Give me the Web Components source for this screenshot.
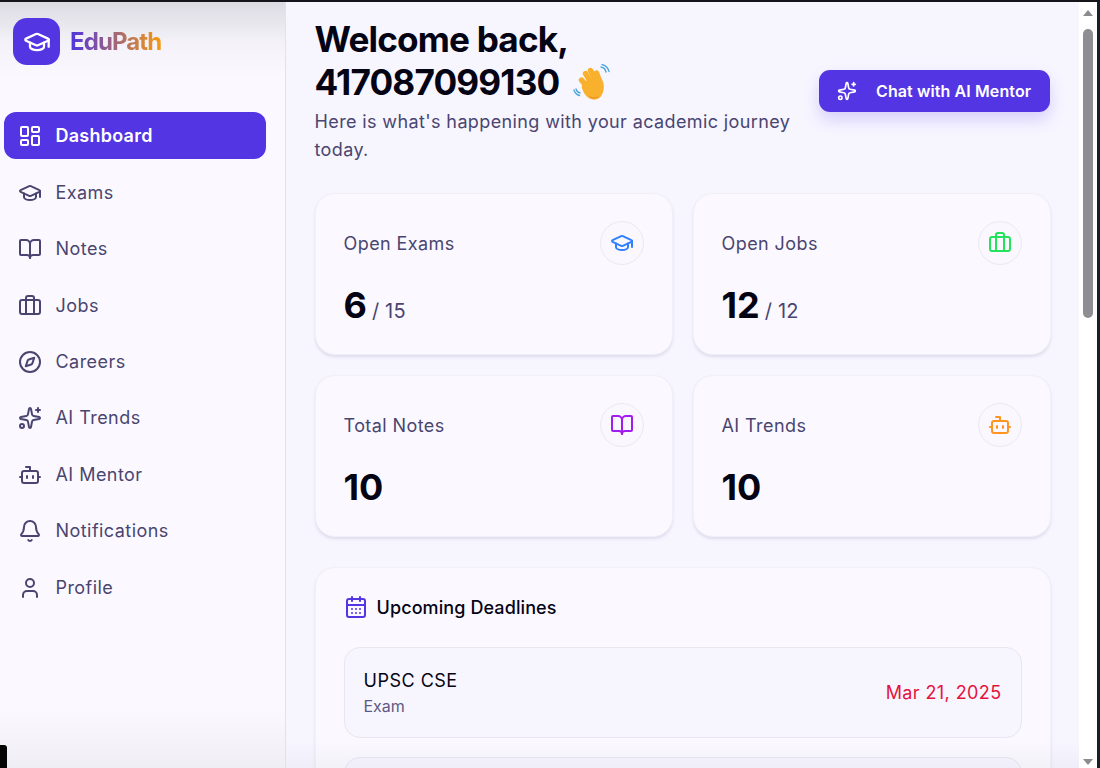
<!DOCTYPE html>
<html lang="en">
<head>
<meta charset="utf-8">
<title>EduPath</title>
<style>
    html, body { margin: 0; padding: 0; height: 100%; overflow: hidden; background: #f7f6ff; }
    body { font-family: "Inter", "Liberation Sans", sans-serif; }
</style>
</head>
<body>
<edu-app>
    <edu-sidebar slot="sidebar">
        <edu-nav-item icon="dashboard" active>Dashboard</edu-nav-item>
        <edu-nav-item icon="cap">Exams</edu-nav-item>
        <edu-nav-item icon="book">Notes</edu-nav-item>
        <edu-nav-item icon="briefcase">Jobs</edu-nav-item>
        <edu-nav-item icon="compass">Careers</edu-nav-item>
        <edu-nav-item icon="sparkles">AI Trends</edu-nav-item>
        <edu-nav-item icon="bot">AI Mentor</edu-nav-item>
        <edu-nav-item icon="bell">Notifications</edu-nav-item>
        <edu-nav-item icon="user">Profile</edu-nav-item>
    </edu-sidebar>

    <edu-welcome name="417087099130"></edu-welcome>

    <edu-stat-grid>
        <edu-stat-card label="Open Exams" value="6" total="15" icon="cap" color="#2f80ff"></edu-stat-card>
        <edu-stat-card label="Open Jobs" value="12" total="12" icon="briefcase" color="#22e35a"></edu-stat-card>
        <edu-stat-card label="Total Notes" value="10" icon="book" color="#a21cf0"></edu-stat-card>
        <edu-stat-card label="AI Trends" value="10" icon="bot" color="#ff9520"></edu-stat-card>
    </edu-stat-grid>

    <edu-deadlines>
        <edu-deadline-row name="UPSC CSE" kind="Exam" date="Mar 21, 2025"></edu-deadline-row>
        <edu-deadline-row></edu-deadline-row>
    </edu-deadlines>
</edu-app>

<script>
// Tracés des icônes (24x24, trait)
const ICONS = {
    dashboard: '<rect x="3" y="3" width="7" height="9" rx="1"/><rect x="14" y="3" width="7" height="5" rx="1"/><rect x="14" y="12" width="7" height="9" rx="1"/><rect x="3" y="16" width="7" height="5" rx="1"/>',
    cap: '<path d="M21.42 10.922a1 1 0 0 0-.019-1.838L12.83 5.18a2 2 0 0 0-1.66 0L2.6 9.08a1 1 0 0 0 0 1.832l8.57 3.908a2 2 0 0 0 1.66 0z"/><path d="M22 10v6"/><path d="M6 12.5V16a6 3 0 0 0 12 0v-3.5"/>',
    book: '<path d="M12 7v14"/><path d="M3 18a1 1 0 0 1-1-1V4a1 1 0 0 1 1-1h5a4 4 0 0 1 4 4 4 4 0 0 1 4-4h5a1 1 0 0 1 1 1v13a1 1 0 0 1-1 1h-6a3 3 0 0 0-3 3 3 3 0 0 0-3-3z"/>',
    briefcase: '<path d="M16 20V4a2 2 0 0 0-2-2h-4a2 2 0 0 0-2 2v16"/><rect x="2" y="6" width="20" height="14" rx="2"/>',
    compass: '<path d="m16.24 7.76-1.804 5.411a2 2 0 0 1-1.265 1.265L7.76 16.24l1.804-5.411a2 2 0 0 1 1.265-1.265z"/><circle cx="12" cy="12" r="10"/>',
    sparkles: '<path d="M11.017 2.814a1 1 0 0 1 1.966 0l1.051 5.558a2 2 0 0 0 1.594 1.594l5.558 1.051a1 1 0 0 1 0 1.966l-5.558 1.051a2 2 0 0 0-1.594 1.594l-1.051 5.558a1 1 0 0 1-1.966 0l-1.051-5.558a2 2 0 0 0-1.594-1.594l-5.558-1.051a1 1 0 0 1 0-1.966l5.558-1.051a2 2 0 0 0 1.594-1.594z"/><path d="M20 2v4"/><path d="M22 4h-4"/><circle cx="4" cy="20" r="2"/>',
    bot: '<path d="M12 8V4H8"/><rect x="4" y="8" width="16" height="12" rx="2"/><path d="M2 14h2"/><path d="M20 14h2"/><path d="M15 13v2"/><path d="M9 13v2"/>',
    bell: '<path d="M10.268 21a2 2 0 0 0 3.464 0"/><path d="M3.262 15.326A1 1 0 0 0 4 17h16a1 1 0 0 0 .74-1.673C19.41 13.956 18 12.499 18 8A6 6 0 0 0 6 8c0 4.499-1.411 5.956-2.738 7.326"/>',
    user: '<path d="M19 21v-2a4 4 0 0 0-4-4H9a4 4 0 0 0-4 4v2"/><circle cx="12" cy="7" r="4"/>',
    calendar: '<path d="M8 2v4"/><path d="M16 2v4"/><rect x="3" y="4" width="18" height="18" rx="2"/><path d="M3 10h18"/><path d="M8 14h.01"/><path d="M12 14h.01"/><path d="M16 14h.01"/><path d="M8 18h.01"/><path d="M12 18h.01"/><path d="M16 18h.01"/>'
};

class EduIcon extends HTMLElement {
    connectedCallback() {
        const size = this.getAttribute('size') || 24;
        const root = this.attachShadow({ mode: 'open' });
        root.innerHTML = `
            <style>
                :host { display: inline-flex; flex: none; width: ${size}px; height: ${size}px; }
                svg { display: block; }
            </style>
            <svg xmlns="http://www.w3.org/2000/svg" width="${size}" height="${size}" viewBox="0 0 24 24" fill="none"
                 stroke="currentColor" stroke-width="2" stroke-linecap="round" stroke-linejoin="round">
                ${ICONS[this.getAttribute('name')] || ''}
            </svg>
        `;
    }
}

class EduApp extends HTMLElement {
    constructor() {
        super();
        this.attachShadow({ mode: 'open' }).innerHTML = `
            <style>
                :host {
                    display: flex;
                    flex-direction: column;
                    position: relative;
                    width: 1100px;
                    height: 768px;
                    overflow: hidden;
                    color: #050414;
                }
                .top { flex: none; height: 2px; background: #16151c; }
                .body { flex: 1; min-height: 0; display: flex; }
                main {
                    flex: 1;
                    min-width: 0;
                    overflow: hidden;
                    box-sizing: border-box;
                    padding: 16px 28.5px 0 28.5px;
                    background: #f7f6ff;
                    display: flex;
                    flex-direction: column;
                    position: relative;
                }
                .shade {
                    position: absolute;
                    left: 0; right: 0; bottom: 0;
                    height: 26px;
                    background: linear-gradient(rgba(90,85,120,0), rgba(90,85,120,.05));
                    pointer-events: none;
                }
                .blob {
                    position: absolute;
                    left: 0; bottom: 0;
                    width: 7px; height: 23px;
                    background: #050505;
                    border-top-right-radius: 3px;
                }
                .bar {
                    flex: none;
                    width: 18px;
                    background: #fff;
                    position: relative;
                    display: flex;
                    flex-direction: column;
                    align-items: center;
                }
                .edge { flex: none; width: 3px; background: #1d1c24; }
                .arrow { width: 0; height: 0; border-left: 5px solid transparent; border-right: 5px solid transparent; }
                .up { margin-top: 8px; border-bottom: 6px solid #8d8b92; }
                .thumb { margin-top: 13px; width: 10px; height: 289px; border-radius: 5px; background: #8f8d94; }
                .down { margin-top: auto; margin-bottom: 3px; border-top: 6px solid #8d8b92; }
            </style>
            <div class="top"></div>
            <div class="body">
                <slot name="sidebar"></slot>
                <main><slot></slot><div class="shade"></div></main>
                <div class="bar">
                    <div class="arrow up"></div>
                    <div class="thumb"></div>
                    <div class="arrow down"></div>
                </div>
                <div class="edge"></div>
            </div>
            <div class="blob"></div>
        `;
    }
}

class EduSidebar extends HTMLElement {
    constructor() {
        super();
        this.attachShadow({ mode: 'open' }).innerHTML = `
            <style>
                :host {
                    display: flex;
                    flex-direction: column;
                    flex: none;
                    width: 286px;
                    box-sizing: border-box;
                    border-right: 1px solid #e3e1ea;
                    background:
                        linear-gradient(rgba(70,68,85,.17), rgba(70,68,85,.04) 40px, rgba(70,68,85,0) 75px),
                        linear-gradient(0deg, rgba(70,68,85,.06), rgba(70,68,85,0) 60px),
                        #fbf9ff;
                }
                .brand { display: flex; align-items: center; gap: 10px; padding: 16px 0 0 13px; height: 47px; }
                .logo {
                    width: 47px; height: 47px;
                    border-radius: 14px;
                    background: #5336e2;
                    color: #fff;
                    display: flex;
                    align-items: center;
                    justify-content: center;
                }
                .name {
                    font-size: 24px;
                    font-weight: 700;
                    letter-spacing: -0.9px;
                    background: linear-gradient(90deg, #4f35e0, #f59a10);
                    -webkit-background-clip: text;
                    background-clip: text;
                    color: transparent;
                }
                nav { display: flex; flex-direction: column; gap: 9.4px; padding: 47px 19px 0 4px; }
            </style>
            <div class="brand">
                <div class="logo"><edu-icon name="cap" size="28"></edu-icon></div>
                <span class="name">EduPath</span>
            </div>
            <nav><slot></slot></nav>
        `;
    }
}

class EduNavItem extends HTMLElement {
    connectedCallback() {
        const root = this.attachShadow({ mode: 'open' });
        root.innerHTML = `
            <style>
                :host {
                    display: flex;
                    align-items: center;
                    gap: 13.5px;
                    height: 47px;
                    padding-left: 14px;
                    border-radius: 12px;
                    font-size: 18px;
                    line-height: 24px;
                    letter-spacing: 0.45px;
                    color: #4a4570;
                }
                :host([active]) {
                    background: #5335e4;
                    color: #fff;
                    font-weight: 600;
                    letter-spacing: 0.25px;
                    margin-bottom: 1px;
                }
            </style>
            <edu-icon name="${this.getAttribute('icon')}"></edu-icon>
            <span><slot></slot></span>
        `;
    }
}

class EduWelcome extends HTMLElement {
    connectedCallback() {
        const root = this.attachShadow({ mode: 'open' });
        root.innerHTML = `
            <style>
                :host { display: flex; align-items: center; gap: 16px; flex: none; margin-right: 0.5px; }
                .text { flex: 1; min-width: 0; }
                h1 { margin: 0; font-size: 35.2px; line-height: 42.5px; font-weight: 700; letter-spacing: -0.85px; color: #050414; }
                h1 svg { vertical-align: -7px; margin-left: 6px; }
                p { margin: 5px 0 0; font-size: 18px; line-height: 28px; letter-spacing: 0.38px; color: #4a4570; }
                button {
                    flex: none;
                    display: flex;
                    align-items: center;
                    gap: 19px;
                    height: 42px;
                    width: 231px;
                    box-sizing: border-box;
                    padding: 0 0 0 18px;
                    border: 0;
                    border-radius: 11px;
                    background: #5335e4;
                    color: #fff;
                    font: 600 16px "Inter", "Liberation Sans", sans-serif;
                    letter-spacing: 0.1px;
                    white-space: nowrap;
                    box-shadow: 0 8px 16px rgba(83,53,228,.2);
                }
            </style>
            <div class="text">
                <h1>Welcome back,<br>${this.getAttribute('name')}
                    <svg width="38" height="38" viewBox="0 0 38 38" fill="none" role="img" aria-label="waving hand">
                        <g stroke="#f9b02c" stroke-width="5.4" stroke-linecap="round">
                            <path d="M15 24 8.5 16"/>
                            <path d="M19 20 12.5 9.5"/>
                            <path d="M23 18 17.5 6.5"/>
                            <path d="M27 18 23.5 9"/>
                        </g>
                        <path d="M11 20c1-3 5-6 9-6s8 1 9.5 3 1.5 6 1 9-2 7-5 8.500-6 1.500-9 0-5.500-5-7-9-1-4 1.500-5.500z" fill="#f9b02c"/>
                        <path d="M16 32c3 1.800 7 1.800 10 0-1 3-9 3.500-10 0z" fill="#e8912a"/>
                        <g stroke="#4aa5dc" stroke-width="1.300" stroke-linecap="round">
                            <path d="M28 3c2.500.5 4.500 2.500 5 5"/>
                            <path d="M29 .5c3.500.8 6 3.300 7 7"/>
                            <path d="M3 25c.5 2 2 3.500 4 4"/>
                            <path d="M1 26c.7 2.800 2.800 4.800 5.500 5.500"/>
                        </g>
                    </svg>
                </h1>
                <p>Here is what's happening with your academic journey today.</p>
            </div>
            <button><edu-icon name="sparkles" size="20"></edu-icon>Chat with AI Mentor</button>
        `;
    }
}

class EduStatGrid extends HTMLElement {
    constructor() {
        super();
        this.attachShadow({ mode: 'open' }).innerHTML = `
            <style>
                :host {
                    display: grid;
                    grid-template-columns: 1fr 1fr;
                    gap: 20px;
                    flex: none;
                    margin-top: 29px;
                }
            </style>
            <slot></slot>
        `;
    }
}

class EduStatCard extends HTMLElement {
    connectedCallback() {
        const total = this.getAttribute('total');
        const root = this.attachShadow({ mode: 'open' });
        root.innerHTML = `
            <style>
                :host {
                    display: flex;
                    justify-content: space-between;
                    box-sizing: border-box;
                    height: 162px;
                    padding: 27px 27.5px 0 28px;
                    background: #fbf9ff;
                    border: 1px solid #f1eff7;
                    border-radius: 20px;
                    box-shadow: 0 2px 3px rgba(80,70,120,.14);
                }
                .label { margin-top: 11px; font-size: 18px; line-height: 24px; letter-spacing: 0.42px; color: #4a4570; }
                .value { margin-top: 27px; font-size: 36px; line-height: 44px; font-weight: 700; color: #050414; }
                .total { font-size: 20px; font-weight: 400; letter-spacing: 0.2px; color: #4a4570; margin-left: 5px; }
                .badge {
                    width: 44px; height: 44px;
                    box-sizing: border-box;
                    border-radius: 50%;
                    border: 1px solid #ebe9f1;
                    background: #faf8fe;
                    display: flex;
                    align-items: center;
                    justify-content: center;
                    color: ${this.getAttribute('color')};
                }
            </style>
            <div>
                <div class="label">${this.getAttribute('label')}</div>
                <div class="value">${this.getAttribute('value')}${total ? `<span class="total">/ ${total}</span>` : ''}</div>
            </div>
            <div class="badge"><edu-icon name="${this.getAttribute('icon')}"></edu-icon></div>
        `;
    }
}

class EduDeadlines extends HTMLElement {
    constructor() {
        super();
        this.attachShadow({ mode: 'open' }).innerHTML = `
            <style>
                :host {
                    display: block;
                    flex: none;
                    margin-top: 30px;
                    padding: 27px 28px 28px;
                    background: #fbf9ff;
                    border: 1px solid #f1eff7;
                    border-radius: 20px;
                    box-shadow: 0 2px 3px rgba(80,70,120,.14);
                }
                h2 {
                    display: flex;
                    align-items: center;
                    gap: 9px;
                    margin: 0 0 28px;
                    height: 24px;
                    font-size: 18px;
                    font-weight: 500;
                    letter-spacing: 0.1px;
                    color: #050414;
                }
                edu-icon { color: #5335e4; }
                .list { display: flex; flex-direction: column; gap: 19px; }
            </style>
            <h2><edu-icon name="calendar"></edu-icon>Upcoming Deadlines</h2>
            <div class="list"><slot></slot></div>
        `;
    }
}

class EduDeadlineRow extends HTMLElement {
    connectedCallback() {
        const root = this.attachShadow({ mode: 'open' });
        root.innerHTML = `
            <style>
                :host {
                    display: flex;
                    align-items: center;
                    justify-content: space-between;
                    box-sizing: border-box;
                    height: 91px;
                    padding: 0 19px;
                    background: #f7f6ff;
                    border: 1px solid #e8e6f0;
                    border-radius: 16px;
                }
                .name { font-size: 18px; line-height: 26px; letter-spacing: 0.5px; color: #050414; }
                .kind { font-size: 16px; line-height: 24px; color: #5f5a85; }
                .date { font-size: 18px; letter-spacing: 0.4px; color: #e6123d; }
            </style>
            <div>
                <div class="name">${this.getAttribute('name') || ''}</div>
                <div class="kind">${this.getAttribute('kind') || ''}</div>
            </div>
            <div class="date">${this.getAttribute('date') || ''}</div>
        `;
    }
}

customElements.define('edu-icon', EduIcon);
customElements.define('edu-app', EduApp);
customElements.define('edu-sidebar', EduSidebar);
customElements.define('edu-nav-item', EduNavItem);
customElements.define('edu-welcome', EduWelcome);
customElements.define('edu-stat-grid', EduStatGrid);
customElements.define('edu-stat-card', EduStatCard);
customElements.define('edu-deadlines', EduDeadlines);
customElements.define('edu-deadline-row', EduDeadlineRow);
</script>
</body>
</html>
